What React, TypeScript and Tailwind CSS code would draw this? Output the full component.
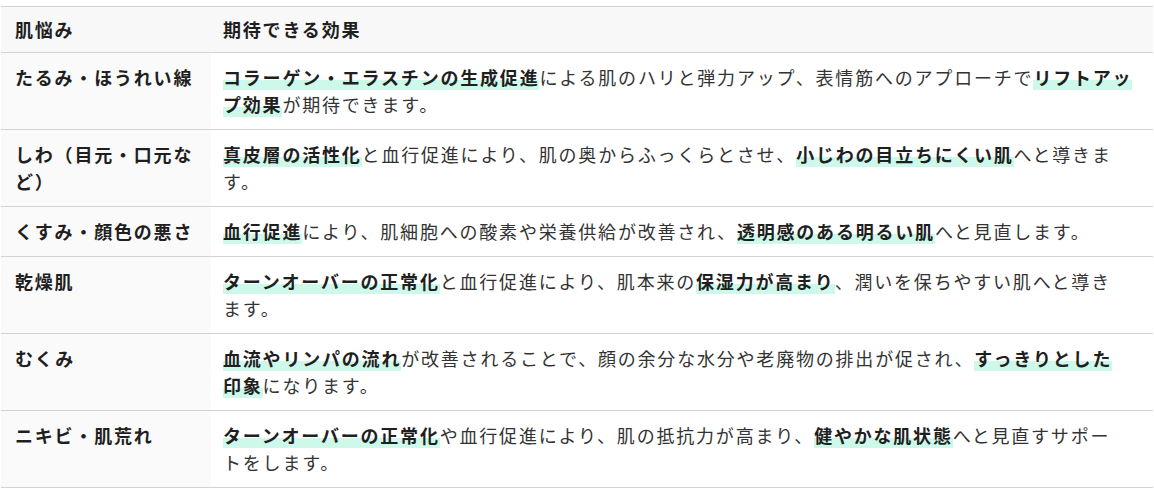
import React from "react";

type Seg = { t: string; b?: boolean };

const rows: { k: string; v: Seg[]; wide?: boolean }[] = [
  {
    k: "たるみ・ほうれい線",
    wide: true,
    v: [
      { t: "コラーゲン・エラスチンの生成促進", b: true },
      { t: "による肌のハリと弾力アップ、表情筋へのアプローチで" },
      { t: "リフトアップ効果", b: true },
      { t: "が期待できます。" },
    ],
  },
  {
    k: "しわ（目元・口元など）",
    v: [
      { t: "真皮層の活性化", b: true },
      { t: "と血行促進により、肌の奥からふっくらとさせ、" },
      { t: "小じわの目立ちにくい肌", b: true },
      { t: "へと導きます。" },
    ],
  },
  {
    k: "くすみ・顔色の悪さ",
    v: [
      { t: "血行促進", b: true },
      { t: "により、肌細胞への酸素や栄養供給が改善され、" },
      { t: "透明感のある明るい肌", b: true },
      { t: "へと見直します。" },
    ],
  },
  {
    k: "乾燥肌",
    v: [
      { t: "ターンオーバーの正常化", b: true },
      { t: "と血行促進により、肌本来の" },
      { t: "保湿力が高まり", b: true },
      { t: "、潤いを保ちやすい肌へと導きます。" },
    ],
  },
  {
    k: "むくみ",
    v: [
      { t: "血流やリンパの流れ", b: true },
      { t: "が改善されることで、顔の余分な水分や老廃物の排出が促され、" },
      { t: "すっきりとした印象", b: true },
      { t: "になります。" },
    ],
  },
  {
    k: "ニキビ・肌荒れ",
    v: [
      { t: "ターンオーバーの正常化", b: true },
      { t: "や血行促進により、肌の抵抗力が高まり、" },
      { t: "健やかな肌状態", b: true },
      { t: "へと見直すサポートをします。" },
    ],
  },
];

export default function App() {
  return (
    <div className="w-[1154px] h-[495px] bg-white pt-[6px] px-[1px] font-['Noto_Sans_CJK_JP','Noto_Sans',sans-serif] text-[18px] tracking-[0.1em] text-[#333]">
      <table className="w-full border-collapse table-fixed">
        <colgroup>
          <col className="w-[210px]" />
          <col />
        </colgroup>
        <thead>
          <tr className="bg-[#f8f8f8] border-y border-[#d3d3d3]">
            <th className="text-left font-bold text-[#1f1f1f] px-[14px] py-[9px] leading-[27px]">肌悩み</th>
            <th className="text-left font-bold text-[#1f1f1f] pl-[12px] pr-[14px] py-[9px] leading-[27px]">期待できる効果</th>
          </tr>
        </thead>
        <tbody>
          {rows.map((r) => (
            <tr key={r.k} className="border-b border-[#d3d3d3]">
              <td className="align-top bg-[#fafafa] font-bold text-[#1f1f1f] px-[14px] py-[11px] leading-[27px]">{r.k}</td>
              <td
                className={
                  r.wide
                    ? "align-top bg-white pl-[12px] pr-[8px] py-[11px] leading-[27px]"
                    : "align-top bg-white pl-[12px] pr-[25px] py-[11px] leading-[27px]"
                }
              >
                {r.v.map((s, i) =>
                  s.b ? (
                    <span
                      key={i}
                      className="font-bold text-[#1f1f1f] bg-[linear-gradient(transparent_60%,#cdf8ea_60%)]"
                    >
                      {s.t}
                    </span>
                  ) : (
                    <span key={i}>{s.t}</span>
                  )
                )}
              </td>
            </tr>
          ))}
        </tbody>
      </table>
    </div>
  );
}
